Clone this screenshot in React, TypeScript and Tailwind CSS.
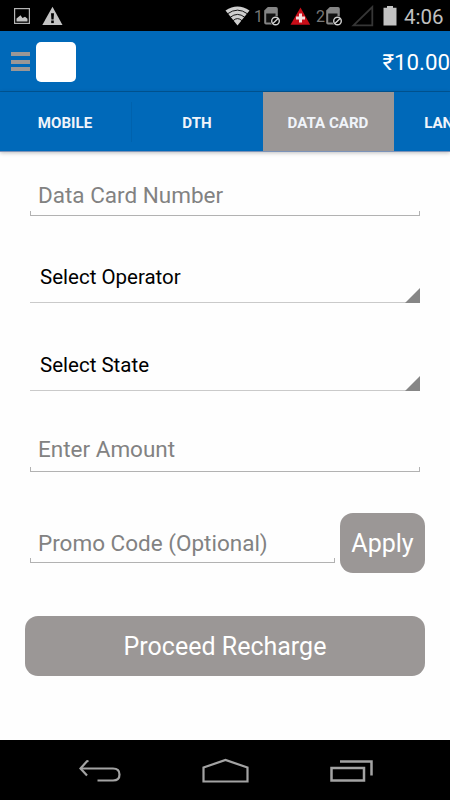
import React from "react";
import clsx from "clsx";

const TABS = [
  { label: "MOBILE", width: "w-[132px]" },
  { label: "DTH", width: "w-[131px]" },
  { label: "DATA CARD", width: "w-[131px]" },
  { label: "LANDLINE", width: "w-[132px]" },
];

const SimIcon: React.FC = () => (
  <svg width="18" height="20" viewBox="0 0 18 20" fill="none">
    <path d="M1.2 4.500 4.800 1H13q1.800 0 1.800 1.800V18.500H3Q1.200 18.500 1.200 16.700Z" fill="#858585" />
    <path d="M3.200 7.500H12.500V16.500H3.200Z" fill="#111" />
    <circle cx="12.500" cy="15" r="5" fill="#000" />
    <circle cx="12.500" cy="15" r="3.800" stroke="#d0d0d0" strokeWidth="1.400" />
    <path d="m9.900 17.600 5.200-5.200" stroke="#d0d0d0" strokeWidth="1.400" />
  </svg>
);

const StatusBar: React.FC = () => (
  <div className="flex h-[31px] items-center bg-black pl-[14px] text-[#c0c0c0]">
    <svg width="16" height="16" viewBox="0 0 16 16" fill="none">
      <rect x="0.600" y="0.600" width="14.800" height="14.800" stroke="#b4b4b4" strokeWidth="1.200" />
      <path d="M2.500 13.500V10.500L5 8.500 6.500 7.300 8.500 10 11 8.700 13.500 10.700V13.500Z" fill="#c4c4c4" />
    </svg>
    <svg className="ml-3" width="21" height="20" viewBox="0 0 21 20">
      <path d="M10.500 0.800 20.500 19H0.300Z" fill="#c4c4c4" />
      <path d="M9 7.300H12L11.600 13.500H9.400Z" fill="#000" />
      <rect x="9.200" y="14.500" width="2.600" height="2.600" fill="#000" />
    </svg>

    <svg className="ml-[162px]" width="26" height="20" viewBox="0 0 26 20">
      <path d="M0.500 4.500Q12.500-3.500 24.500 4.500L12.500 19.500Z" fill="#cfcfcf" />
      <g fill="none" stroke="#000" strokeWidth="0.900">
        <path d="M2.500 7.800Q12.500 0.500 22.500 7.800" />
        <path d="M5.200 11.300Q12.500 5.500 19.800 11.300" />
        <path d="M8 14.700Q12.500 10.500 17 14.700" />
      </g>
    </svg>
    <span className="mt-[3px] ml-[3px] w-[9px] text-[16px] text-[#777]">1</span>
    <SimIcon />
    <svg className="ml-[9px]" width="21" height="20" viewBox="0 0 21 20">
      <path d="M10.500 1.500 20.200 18.800H0.500Z" fill="#c90d18" />
      <path d="M10.500 7.500V16.500M6 12H15" stroke="#f2dede" strokeWidth="3" />
    </svg>
    <span className="mt-[3px] ml-[5px] w-[9px] text-[16px] text-[#777]">2</span>
    <SimIcon />
    <svg className="ml-[8px]" width="23" height="22" viewBox="0 0 23 22" fill="none">
      <path d="M2.500 20.300 21.300 2V20.300Z" stroke="#363636" strokeWidth="1.800" />
    </svg>
    <svg className="ml-[9px]" width="14" height="20" viewBox="0 0 14 20">
      <path d="M0.500 1.800H4V0H10V1.800H13.500V19.500H0.500Z" fill="#c2c2c2" />
    </svg>
    <span className="mt-[3px] ml-[7px] text-[20.500px] leading-[31px]">4:06</span>
  </div>
);

const Header: React.FC = () => (
  <header className="flex h-[61px] items-center justify-between border-b border-[#005796] bg-[#0069b9]">
    <div className="flex items-center pt-px pl-[11px]">
      <div className="mr-[6px] flex w-[19px] flex-col gap-[3.500px]">
        <div className="h-1 bg-[#9b9796]" />
        <div className="h-1 bg-[#9b9796]" />
        <div className="h-1 bg-[#9b9796]" />
      </div>
      <div className="size-10 rounded-[5px] bg-white" />
    </div>
    <span className="pt-[3px] text-[22.300px] text-white">₹10.00</span>
  </header>
);

const Tabs: React.FC = () => (
  <nav className="flex h-[60px] overflow-hidden border-b border-[#7d93b8] bg-[#0069b9] shadow-[0_1px_4px_rgba(0,0,0,0.25)]">
    {TABS.map((tab, i) => (
      <div
        key={tab.label}
        className={clsx(
          "flex shrink-0 items-center justify-center text-[15.100px] font-bold text-[#f0f4fa]",
          tab.width,
          i === 2 && "bg-[#9b9796]"
        )}
      >
        <span className="flex-1 pt-[3px] pr-px text-center">{tab.label}</span>
        {i === 0 && <div className="h-10 w-px bg-[#0062ad]" />}
      </div>
    ))}
  </nav>
);

// Holo style input: a thin line with a short tick at both ends
const Field: React.FC<{ label: string; className?: string; textClass?: string }> = ({ label, className, textClass }) => (
  <div className={className}>
    <div
      className={clsx(
        "flex h-[35px] items-center pl-2 text-[22.500px] whitespace-nowrap text-[#828282]",
        textClass
      )}
    >
      {label}
    </div>
    <div className="h-[5px] border border-t-0 border-[#b2b2b2]" />
  </div>
);

const Spinner: React.FC<{ label: string; className?: string }> = ({ label, className }) => (
  <div className={clsx("flex h-[51px] items-end border-b border-[#cacaca]", className)}>
    <span className="flex-1 self-center pl-[10px] text-[20.500px] text-black">{label}</span>
    <svg className="-mb-px" width="15" height="15" viewBox="0 0 15 15">
      <path d="M0 15 15 0V15Z" fill="#868686" />
    </svg>
  </div>
);

const NavBar: React.FC = () => (
  <div className="flex h-[60px] items-center justify-center bg-black pt-[2px] pl-[3px]">
    <svg width="43" height="24" viewBox="0 0 43 24" fill="none" stroke="#a3a3a3" strokeWidth="2.200">
      <path d="M2 9.500H34Q40.500 9.500 40.500 15.500T34 21.500H18.500" />
      <path d="M9.500 2 8 2.200 1.500 9.500 8 16.500" />
    </svg>
    <svg className="ml-[79px]" width="48" height="26" viewBox="0 0 48 26" fill="none" stroke="#a3a3a3" strokeWidth="2.200">
      <path d="M2.500 9.500 24.500 2 46.500 9.500V23.500H2.500Z" />
    </svg>
    <svg className="ml-[81px]" width="44" height="24" viewBox="0 0 44 24" fill="none" stroke="#a3a3a3" strokeWidth="2.500">
      <rect x="1.500" y="9" width="32.500" height="12.500" />
      <path d="M10 2.500H41.500V16.500" />
    </svg>
  </div>
);

const App: React.FC = () => {
  return (
    <div className="flex h-[800px] w-[450px] flex-col overflow-hidden bg-[#fefefe] font-['Roboto',sans-serif]">
      <StatusBar />
      <Header />
      <Tabs />

      {/* Form */}
      <main className="flex-1 px-[25px] pt-6">
        <div className="px-[5px]">
          <Field label="Data Card Number" textClass="pt-[5px]" />
          <Spinner label="Select Operator" className="mt-9" />
          <Spinner label="Select State" className="mt-[37px]" />
          <Field label="Enter Amount" className="mt-[41px]" />
        </div>
        <div className="mt-[41px] flex">
          <Field
            label="Promo Code (Optional)"
            textClass="pt-[6px]"
            className="mt-[10px] mr-[5px] ml-[5px] w-[305px]"
          />
          <button className="h-[60px] w-[85px] rounded-[13px] bg-[#9b9796] pt-[2px] text-[25px] text-white">
            Apply
          </button>
        </div>
        <button className="mt-[43px] h-[60px] w-full rounded-[13px] bg-[#9b9796] pt-[2px] text-[25px] text-white">
          Proceed Recharge
        </button>
      </main>

      <NavBar />
    </div>
  );
};

export default App;
